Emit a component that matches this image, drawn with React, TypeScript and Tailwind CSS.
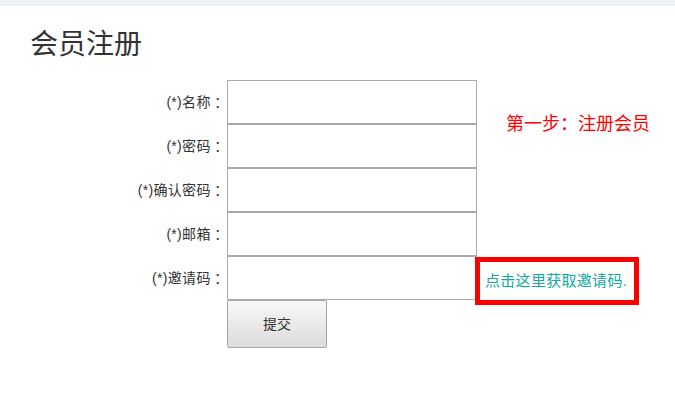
const FONT = '"Liberation Sans", "Noto Sans CJK SC", sans-serif';
const TC = '"Noto Sans CJK TC", sans-serif';

const fields = ['(*)名称', '(*)密码', '(*)确认密码', '(*)邮箱', '(*)邀请码'];

// full-width colon centred in its box, as in the original page's font
function Colon() {
  return <span style={{ fontFamily: TC }}>：</span>;
}

export default function App() {
  return (
    <div className="w-[675px] h-[398px] bg-white text-[#333]" style={{ fontFamily: FONT }}>
      <div className="h-[6px] bg-[#eef2f6]" />
      <h1 className="pl-[30px] pt-[21px] text-[28px] leading-[36px] text-[#333]">会员注册</h1>

      <div className="mt-[17px] grid grid-cols-[227px_250px_1fr] grid-rows-[44px_44px_44px_44px_44px_48px]">
        {fields.map((label, i) => (
          <div key={label} className="contents">
            <label
              className="flex items-center justify-end pr-[2px] text-[14px] tracking-[0.3px] text-[#333]"
              style={{ gridRow: i + 1, gridColumn: 1 }}
            >
              {label}
              <Colon />
            </label>
            <input
              type={i === 1 || i === 2 ? 'password' : 'text'}
              className="h-[44px] w-[250px] border border-[#a9a9a9] bg-white px-2 text-[14px] outline-none"
              style={{ gridRow: i + 1, gridColumn: 2 }}
            />
          </div>
        ))}

        {/* step hint spans the first two rows */}
        <div className="col-start-3 row-start-1 row-span-2 flex items-center pl-[29px] text-[18px] text-[#ff0000]">
          第一步：注册会员
        </div>

        {/* invitation link, highlighted with a red frame */}
        <div className="relative col-start-3 row-start-5">
          <a
            href="#"
            className="absolute left-[-2px] top-[1px] flex h-[48px] w-[164px] items-center border-[5px] border-[#ff0000] pl-[5px] text-[15px] tracking-[0.3px] whitespace-nowrap text-[#12a89d]"
          >
            点击这里获取邀请码.
          </a>
        </div>

        <div className="col-start-2 row-start-6">
          <button className="h-[48px] w-[100px] rounded-[2px] border border-[#a6a6a6] bg-gradient-to-b from-[#f8f8f8] to-[#dcdcdc] text-[14px] text-[#333]">
            提交
          </button>
        </div>
      </div>
    </div>
  );
}
